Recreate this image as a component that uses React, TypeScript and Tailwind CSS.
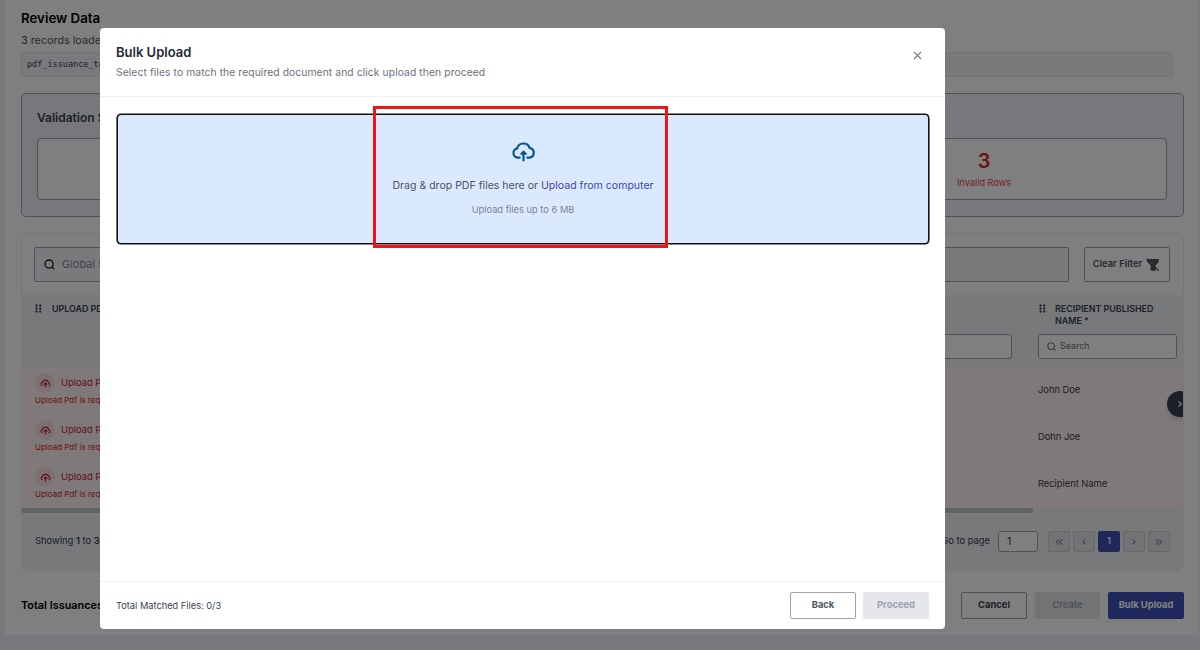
import React from 'react';

const CloudUp = ({ className }: { className: string }) => (
  <svg viewBox="0 0 24 22" className={className} fill="none" stroke="currentColor" strokeWidth="2.3" strokeLinecap="round" strokeLinejoin="round">
    <path d="M8 17.4H6.3a4.9 4.9 0 0 1-.9-9.7 6.8 6.8 0 0 1 13-.5 5.2 5.2 0 0 1 .2 10.2H16" />
    <path d="M12 20.4V12.3" />
    <path d="M9.2 13.6L12 10.8l2.8 2.8z" fill="currentColor" strokeWidth="1.6" />
  </svg>
);

const SmallCloudUp = () => (
  <svg viewBox="0 0 12 10" className="h-[9px] w-[11px]" fill="none" stroke="currentColor" strokeWidth="1.25" strokeLinecap="round" strokeLinejoin="round">
    <path d="M2.3 7.4C.3 6.6.9 4.3 2.6 4 3 .3 8.8.3 9.3 4c2 .3 2.3 2.7.5 3.4" />
    <path d="M6 8.8V4.7M4.3 6L6 4.4 7.7 6" />
  </svg>
);

const Search = ({ className }: { className: string }) => (
  <svg viewBox="0 0 12 12" className={className} fill="none" stroke="currentColor" strokeWidth="1.4" strokeLinecap="round">
    <circle cx="5.5" cy="5.5" r="4.4" />
    <path d="M8.8 8.8l2 2" />
  </svg>
);

const Grip = () => (
  <svg viewBox="0 0 7 9" className="h-[9px] w-[7px] shrink-0" fill="#1f2937">
    {[0.5, 3.5, 6.5].map((y) => (
      <React.Fragment key={y}>
        <rect x="0.5" y={y} width="2" height="2" rx="0.4" />
        <rect x="4.2" y={y} width="2" height="2" rx="0.4" />
      </React.Fragment>
    ))}
  </svg>
);

const FilterOff = () => (
  <svg viewBox="0 0 14 14" className="h-[14px] w-[14px]" fill="#4b5563">
    <path d="M0.6 1h12.2v2.8L9.6 7.6V13L4.6 12.6V7.6L1.2 3.8z" />
    <path d="M4 3.2l8.5 8.4" stroke="#d6d8db" strokeWidth="0.6" />
    <path d="M.8.8l11.8 11.8" stroke="#4b5563" strokeWidth="1.3" />
  </svg>
);

const Chevron = ({ dir, double }: { dir: 'l' | 'r'; double?: boolean }) => (
  <svg viewBox="0 0 8 8" className="h-2 w-2" fill="none" stroke="currentColor" strokeWidth="1.2">
    {dir === 'l' ? (
      double ? <path d="M4 1.3L1.3 4 4 6.7M7.2 1.3L4.5 4l2.7 2.7" /> : <path d="M5.5 1.3L2.8 4l2.7 2.7" />
    ) : double ? (
      <path d="M.8 1.3L3.5 4 .8 6.7M4 1.3L6.7 4 4 6.7" />
    ) : (
      <path d="M2.5 1.3L5.2 4 2.5 6.7" />
    )}
  </svg>
);

const names = ['John Doe', 'Dohn Joe', 'Recipient Name'];
const pageButton = 'flex h-[21px] w-[22px] items-center justify-center rounded-[2px] border border-[#cdd0d5] bg-[#e5e7eb] text-[#8b929d]';

export default function App() {
  return (
    <div className="relative h-[650px] w-[1200px] overflow-hidden bg-[#eef0f8] pl-[5px] pr-px font-['Inter',sans-serif] text-[#374151]">
      <div className="h-[635px] bg-white px-4 pr-[15px] pt-[9px]">
        <h1 className="h-[18px] whitespace-nowrap text-[13.3px] font-semibold leading-[18px] text-black">Review Data</h1>
        <p className="mt-[6px] h-[16px] text-[10.8px] leading-[16px] text-[#4b5563]">3 records loaded</p>
        <div className="mr-[11px] mt-[3px] flex h-[25px] items-center rounded-[3px] border border-[#e5e7eb] bg-[#f3f4f6] px-[5px] font-['DejaVu_Sans_Mono',monospace] text-[8.5px] text-[#374151]">
          pdf_issuance_te
        </div>

        <section className="mt-4 h-[124px] rounded-[5px] border border-[#9ca3af] bg-[#eff0f6] px-4 pl-[15px] pt-4">
          <h2 className="h-[18px] text-[12px] font-semibold leading-[16px] text-[#374151]">Validation S</h2>
          <div className="mt-[10px] flex h-[62px] gap-4">
            <div className="flex-1 rounded-[4px] border border-[#9ca3af] bg-white" />
            <div className="flex-1 rounded-[4px] border border-[#9ca3af] bg-white" />
            <div className="flex w-[366px] flex-col items-center rounded-[4px] border border-[#9ca3af] bg-white pt-[10px] text-[#ef4444]">
              <b className="text-[20px] font-semibold leading-[24px] text-[#dc2626]">3</b>
              <span className="mt-[3px] text-[9.2px] leading-[14px]">Invalid Rows</span>
            </div>
          </div>
        </section>

        <section className="mt-4 h-[338px] overflow-hidden rounded-[6px] border border-[#eceef1]">
          <div className="flex h-[61px] gap-[15px] pl-[12px] pr-[13px] pt-[13px]">
            <div className="flex h-[35px] flex-1 items-center gap-[7px] rounded-[2px] border border-[#9ca3af] bg-[#f3f4f8] pl-[9px] text-[11px] text-[#858c98]">
              <Search className="h-[11px] w-[11px] text-[#111827]" />
              Global S
            </div>
            <button className="flex h-[35px] w-[86px] items-center justify-center gap-[4px] whitespace-nowrap rounded-[2px] border border-[#9ca3af] pr-[1px] text-[9.4px] font-semibold text-[#4b5563]">
              Clear Filter
              <FilterOff />
            </button>
          </div>
          <div className="flex h-[73px] justify-between bg-[#f1f3f7] pr-[6px] pt-[7px] text-[8.9px] font-semibold leading-[12px] text-[#374151]">
            <div className="flex gap-[10px] pl-[13px]">
              <span className="pt-[2px]"><Grip /></span>
              <span className="pt-px">UPLOAD PD</span>
            </div>
            <div className="flex gap-[26px]">
              <div className="mt-[32px] h-[25px] w-[140px] rounded-[3px] border border-[#9ca3af] bg-white" />
              <div className="w-[139px]">
                <div className="flex h-[32px] gap-[9px] whitespace-nowrap">
                  <span className="pl-px pt-[2px]"><Grip /></span>
                  <span className="pt-px">RECIPIENT PUBLISHED<br />NAME *</span>
                </div>
                <div className="flex h-[25px] items-center gap-1 rounded-[3px] border border-[#9ca3af] bg-white pb-px pl-2 text-[8.9px] font-normal text-[#6b7280]">
                  <Search className="h-[9px] w-[9px]" />
                  Search
                </div>
              </div>
            </div>
          </div>
          <div className="relative">
            {names.map((name) => (
              <div key={name} className="flex h-[47px] justify-between border-b border-[#f9ecec] bg-[#fef2f2] pl-[13px] pt-[5px]">
                <div className="text-[#dc2626]">
                  <div className="flex h-[20px] items-center gap-[6px] text-[9.4px] text-[#c81e3c]">
                    <span className="flex h-[20px] w-[20px] items-center justify-center rounded-full bg-[#fbe0e0]">
                      <SmallCloudUp />
                    </span>
                    Upload P
                  </div>
                  <p className="pt-[1px] text-[8px] leading-[12px]">Upload Pdf is requ</p>
                </div>
                <span className="w-[145px] pt-[10px] text-[9.3px] leading-[14px]">{name}</span>
              </div>
            ))}
            <span className="absolute right-[-10px] top-[23px] flex h-[26px] w-[26px] items-center justify-center rounded-full bg-[#374151] text-white shadow-md">
              <Chevron dir="r" />
            </span>
          </div>
          <div className="h-[61px] bg-[#f1f3f7]">
            <div className="-ml-px h-[5px] w-[1012px] -translate-y-px rounded-full bg-[#c1c4c6]" />
            <div className="flex h-[55px] items-center justify-between pl-[13px] pr-[13px] text-[9.4px]">
              <span>Showing <b className="font-semibold">1</b> to <b className="font-semibold">3</b></span>
              <div className="flex items-center gap-[3px]">
                <span>Go to page</span>
                <span className="ml-[5px] mr-[7px] flex h-[21px] w-[40px] items-center rounded-[3px] border border-[#9ca3af] bg-white pl-2 text-[10.5px]">1</span>
                <span className={pageButton}><Chevron dir="l" double /></span>
                <span className={pageButton}><Chevron dir="l" /></span>
                <span className="flex h-[21px] w-[22px] items-center justify-center rounded-[2px] bg-[#3f51b5] text-[8.5px] font-semibold text-white">1</span>
                <span className={pageButton}><Chevron dir="r" /></span>
                <span className={pageButton}><Chevron dir="r" double /></span>
              </div>
            </div>
          </div>
        </section>

        <footer className="mt-[21px] flex h-[27px] items-center text-[9.4px] font-bold">
          <span className="mr-auto text-[10.9px] font-semibold text-black">Total Issuances</span>
          <button className="h-[27px] w-[66px] rounded-[2px] border border-[#9ca3af] text-[#374151]">Cancel</button>
          <button className="ml-2 h-[27px] w-[65px] rounded-[2px] bg-[#e5e7eb] font-semibold text-[#9ca3af]">Create</button>
          <button className="ml-2 h-[27px] w-[76px] whitespace-nowrap rounded-[2px] bg-[#3f51b5] text-white">Bulk Upload</button>
        </footer>
      </div>

      <div className="absolute inset-0 bg-black/50" />

      <div role="dialog" className="absolute left-[100px] top-[28px] flex h-[601px] w-[845px] flex-col rounded-[4px] bg-white">
        <header className="flex h-[69px] justify-between border-b border-[#eeeff1] pl-4 pr-[23px] pt-[15px]">
          <div>
            <h2 className="text-[13px] font-semibold leading-[19px] text-[#1f2937]">Bulk Upload</h2>
            <p className="mt-[3px] text-[10.3px] leading-[14px] tracking-[0.09px] text-[#6b7280]">Select files to match the required document and click upload then proceed</p>
          </div>
          <svg viewBox="0 0 10 10" className="mt-[8px] h-[9px] w-[9px]" stroke="#6b7280" strokeWidth="1.3">
            <path d="M1 1l8 8M9 1L1 9" />
          </svg>
        </header>
        <main className="flex-1 pl-[17px] pr-4 pt-[17px]">
          <div className="flex h-[130px] flex-col items-center rounded-[4px] border border-[#111] bg-[#dbe9fe] pt-[26px] shadow-[0_0_0_0.6px_#111]">
            <CloudUp className="h-[21px] w-[23px] text-[#075591]" />
            <p className="mt-[16px] text-[10.55px] leading-[16px] text-[#4b5563]">
              Drag &amp; drop PDF files here or <span className="text-[#3f46b5]">Upload from computer</span>
            </p>
            <p className="mt-[9px] text-[9.3px] leading-[14px] text-[#7b8391]">Upload files up to 6 MB</p>
          </div>
        </main>
        <footer className="flex h-[48px] items-center border-t border-[#eeeff1] px-4 text-[9.4px]">
          <span className="mr-auto pt-px text-[9.25px]">Total Matched Files: 0/3</span>
          <button className="h-[27px] w-[66px] rounded-[2px] border border-[#9ca3af] font-bold text-[#4b5563]">Back</button>
          <button className="ml-[7px] h-[27px] w-[66px] rounded-[2px] bg-[#e5e7eb] font-bold text-[#9ca3af]">Proceed</button>
        </footer>
      </div>
      <div className="absolute left-[373px] top-[106px] h-[142px] w-[295px] border-[3px] border-[#ee1515]" />
    </div>
  );
}
